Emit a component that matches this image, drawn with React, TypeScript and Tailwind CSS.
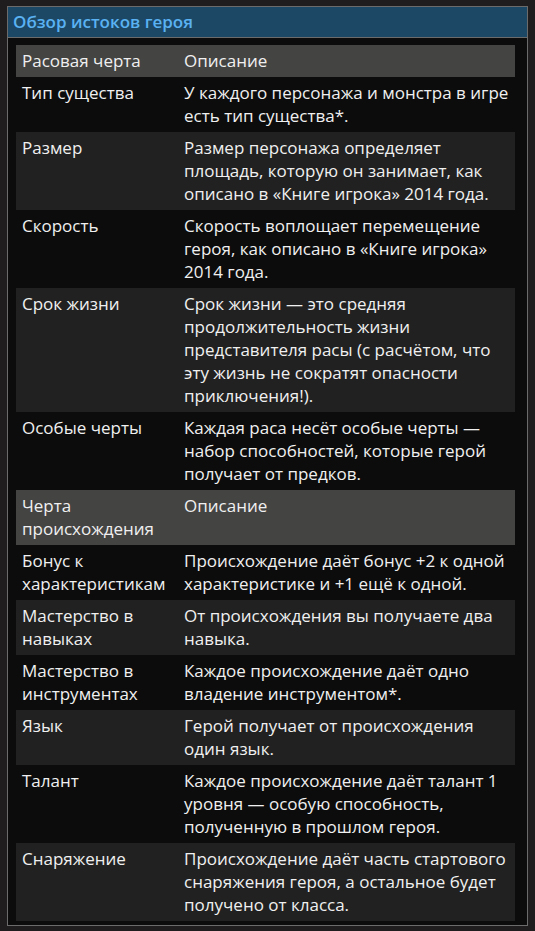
const ROWS: { head?: boolean; name: string; desc: string }[] = [
  { head: true, name: "Расовая черта", desc: "Описание" },
  { name: "Тип существа", desc: "У каждого персонажа и монстра в игре есть тип существа*." },
  { name: "Размер", desc: "Размер персонажа определяет площадь, которую он занимает, как описано в «Книге игрока» 2014 года." },
  { name: "Скорость", desc: "Скорость воплощает перемещение героя, как описано в «Книге игрока» 2014 года." },
  {
    name: "Срок жизни",
    desc: "Срок жизни — это средняя продолжительность жизни представителя расы (с расчётом, что эту жизнь не сократят опасности приключения!).",
  },
  { name: "Особые черты", desc: "Каждая раса несёт особые черты — набор способностей, которые герой получает от предков." },
  { head: true, name: "Черта происхождения", desc: "Описание" },
  { name: "Бонус к характеристикам", desc: "Происхождение даёт бонус +2 к одной характеристике и +1 ещё к одной." },
  { name: "Мастерство в навыках", desc: "От происхождения вы получаете два навыка." },
  { name: "Мастерство в инструментах", desc: "Каждое происхождение даёт одно владение инструментом*." },
  { name: "Язык", desc: "Герой получает от происхождения один язык." },
  { name: "Талант", desc: "Каждое происхождение даёт талант 1 уровня — особую способность, полученную в прошлом героя." },
  { name: "Снаряжение", desc: "Происхождение даёт часть стартового снаряжения героя, а остальное будет получено от класса." },
];

export default function App() {
  let stripe = 0;
  return (
    <div className="min-h-[931px] bg-[#1f1d1d] px-[7px] pt-[6px] pb-[5px] font-['Open_Sans','Noto_Sans',sans-serif]">
      <div className="border border-[#6b6b6b] bg-[#0c0c0c]">
        <div className="border-b border-[#6b6b6b] bg-[#1c4866] px-[5px] py-[3px] text-[17px] leading-[24px] font-semibold text-[#5ab2f2]">
          Обзор истоков героя
        </div>
        <div className="pl-[8px] pr-[12px] pt-[7px] pb-[4px]">
          <table className="w-full border-collapse text-[17px] leading-[23px] text-[#f0f0f0]">
            <tbody>
              {ROWS.map((r, i) => {
                let bg = "";
                if (r.head) {
                  bg = "bg-[#444443]";
                  stripe = 0;
                } else {
                  bg = stripe % 2 === 1 ? "bg-[#212121]" : "";
                  stripe++;
                }
                return (
                  <tr key={i} className={bg}>
                    <td className="w-[164px] px-[6px] pt-[4px] pb-[5px] align-top">{r.name}</td>
                    <td className="px-[4px] pt-[4px] pb-[5px] align-top">{r.desc}</td>
                  </tr>
                );
              })}
            </tbody>
          </table>
        </div>
      </div>
    </div>
  );
}
